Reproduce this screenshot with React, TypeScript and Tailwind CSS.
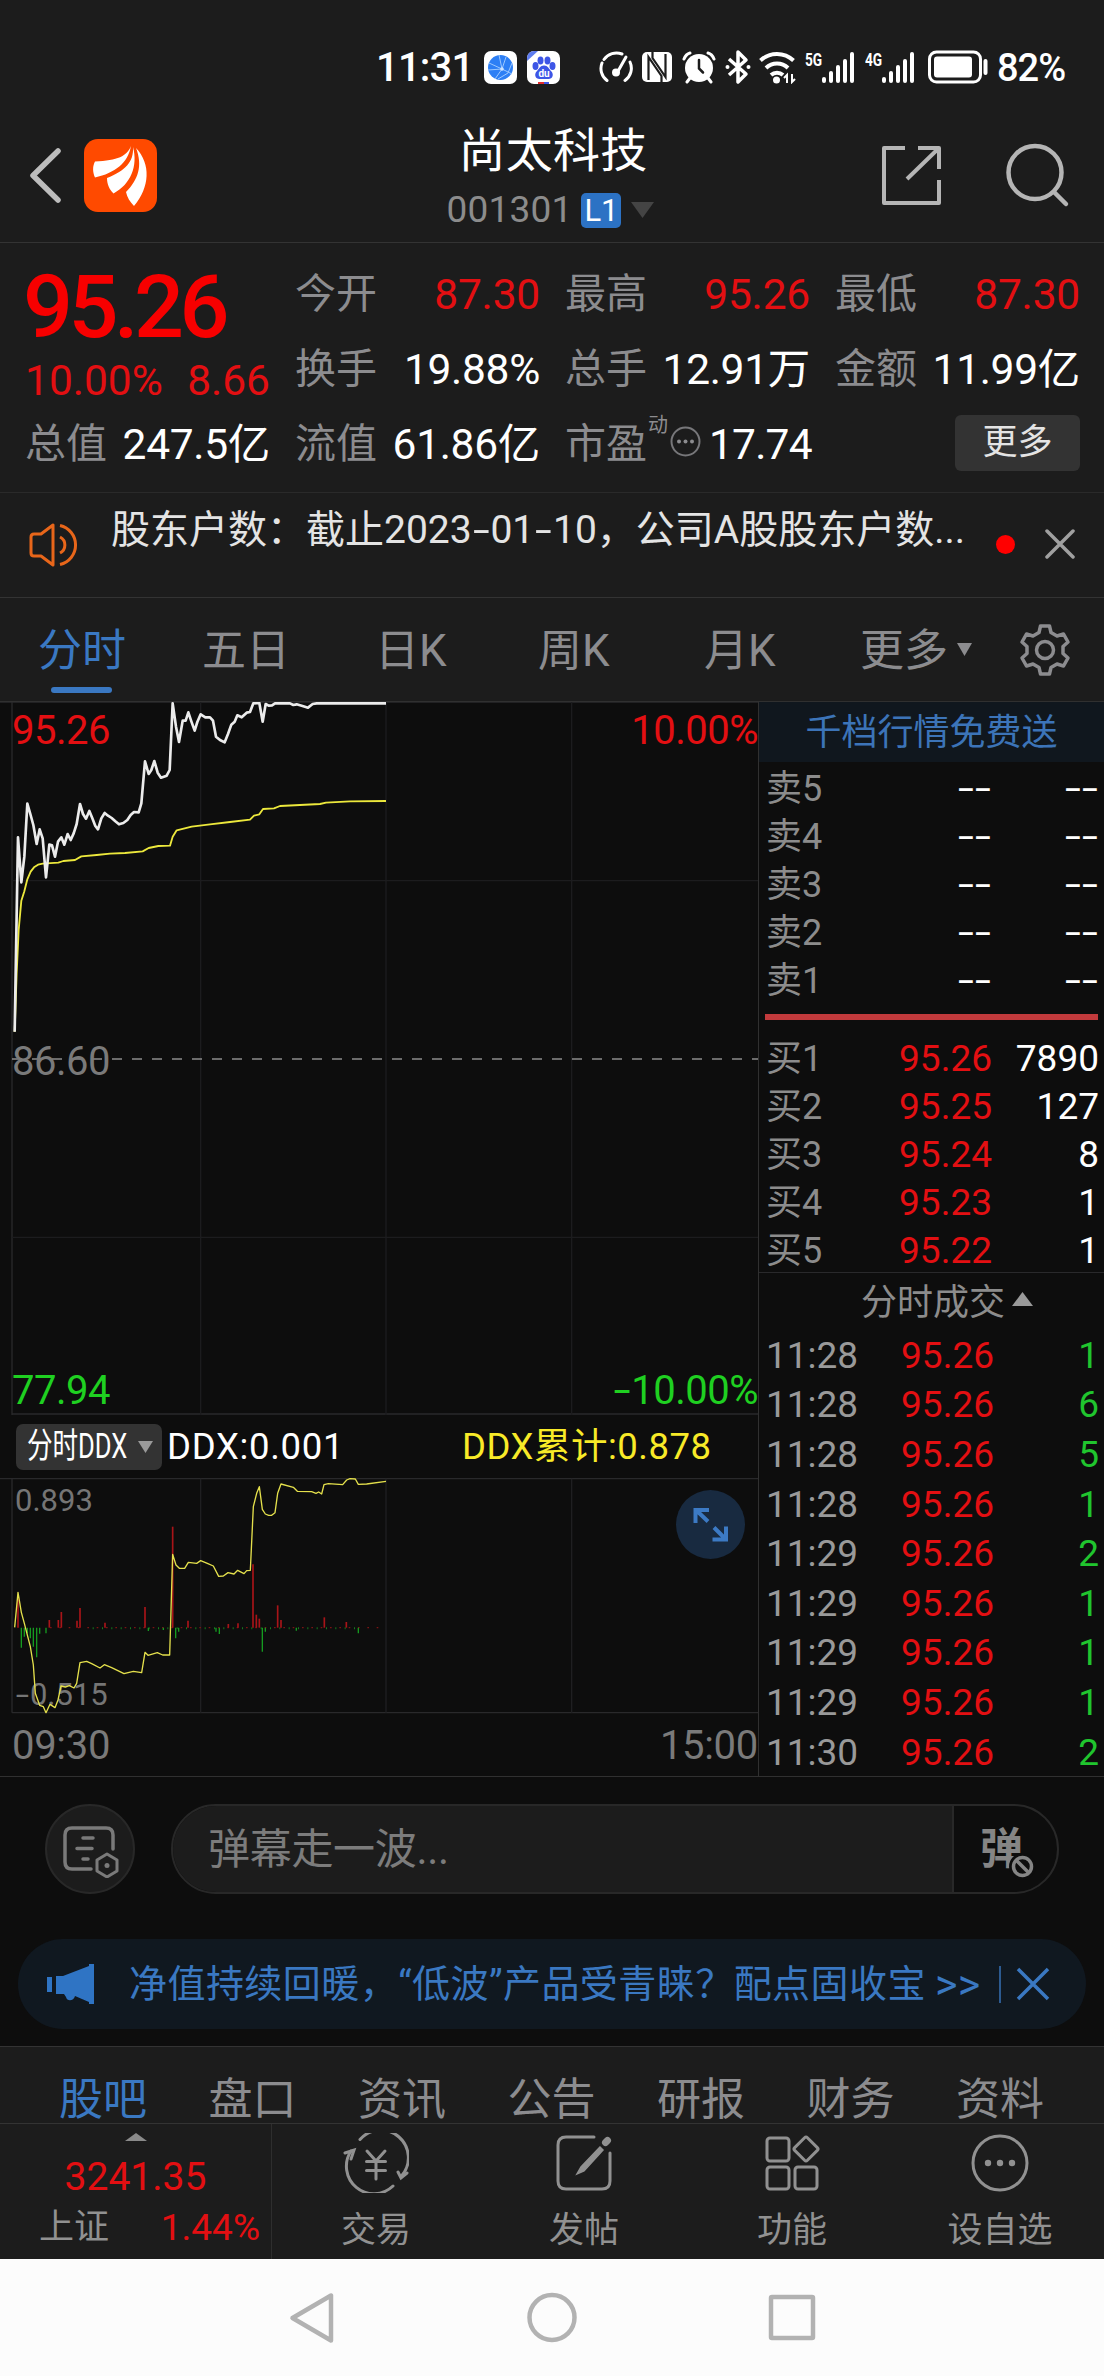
import React from 'react';

const stats = [
  [
    { label: '今开', value: '87.30', up: true },
    { label: '换手', value: '19.88%' },
    { label: '流值', value: '61.86亿' },
  ],
  [
    { label: '最高', value: '95.26', up: true },
    { label: '总手', value: '12.91万' },
  ],
  [
    { label: '最低', value: '87.30', up: true },
    { label: '金额', value: '11.99亿' },
  ],
];

const sells = ['卖5', '卖4', '卖3', '卖2', '卖1'];

const buys = [
  ['买1', '95.26', '7890'],
  ['买2', '95.25', '127'],
  ['买3', '95.24', '8'],
  ['买4', '95.23', '1'],
  ['买5', '95.22', '1'],
];

const trades = [
  ['11:28', '1'],
  ['11:28', '6'],
  ['11:28', '5'],
  ['11:28', '1'],
  ['11:29', '2'],
  ['11:29', '1'],
  ['11:29', '1'],
  ['11:29', '1'],
  ['11:30', '2'],
];

const infoTabs = ['股吧', '盘口', '资讯', '公告', '研报', '财务', '资料'];

const pricePoints =
  '44,1025 54,442 64,577 73,500 82,341 91,372 100,405 110,462 119,418 128,445 138,562 148,464 156,466 165,500 174,455 184,442 193,464 203,432 212,450 221,430 230,402 240,342 249,372 258,386 268,363 277,385 286,408 294,418 304,385 314,369 324,377 335,384 346,394 357,403 370,399 382,390 392,375 402,366 416,367 424,340 435,214 446,252 454,240 463,213 473,248 483,263 500,257 509,240 518,40 528,110 537,156 548,92 557,92 565,67 574,94 584,122 592,96 602,73 616,82 630,82 639,92 648,140 660,150 674,157 684,132 694,104 704,95 712,76 725,82 740,68 750,66 760,40 778,39 788,95 797,42 806,47 816,46 825,40 870,40 880,45 890,43 910,49 924,53 938,42 950,40 1158,40';

const avgPoints =
  '44,1025 50,850 56,720 64,632 73,604 82,568 92,545 102,532 114,524 128,521 175,518 190,513 225,510 244,499 290,495 330,491 375,489 428,484 446,474 475,468 510,467 518,440 530,421 575,410 630,403 690,396 750,389 762,377 778,373 789,357 822,355 840,348 900,345 960,342 978,338 1050,334 1158,333';

const ddxPoints =
  '44,832 54,727 64,787 73,820 91,890 100,945 106,1030 119,1066 130,1070 138,1088 150,1063 165,1073 174,1050 183,1008 196,1011 208,1007 222,1014 230,1000 240,938 260,934 275,941 300,954 313,944 335,953 372,971 400,964 425,968 435,907 444,916 472,908 488,915 509,915 518,613 528,645 538,655 554,655 565,637 590,640 602,632 622,640 640,648 656,679 670,678 684,668 702,672 713,661 732,671 740,662 751,661 760,470 770,430 778,410 787,478 796,492 806,496 815,496 825,488 833,430 843,402 880,412 892,424 935,425 948,430 956,426 965,432 972,404 985,401 1028,404 1040,390 1050,386 1066,387 1075,403 1100,402 1158,394';

const ddxUp = [
  [54, 745], [148, 810], [175, 810], [184, 786], [231, 812], [240, 774], [315, 818], [435, 771],
  [518, 530], [564, 812], [685, 822], [714, 820], [759, 643], [769, 794], [778, 806], [833, 766],
  [843, 810], [973, 802], [1039, 816],
];

const ddxDown = [
  [64, 893], [73, 860], [82, 850], [91, 865], [100, 890], [110, 922], [119, 851], [138, 850],
  [445, 843], [490, 840], [527, 865], [536, 845], [648, 845], [658, 852], [787, 905], [796, 845],
  [889, 842], [1075, 850],
];

// wide hyphen, Roboto's own is too short for numbers
function Dash() {
  return <span className="inline-block w-[0.48em] scale-x-[1.55] text-center">-</span>;
}

function Signal({ label }: { label: string }) {
  return (
    <div className="flex h-[34px] items-start text-white">
      <span className="w-[17px] text-[18px] leading-[20px] font-bold">
        <span className="inline-block origin-left scale-x-[0.76]">{label}</span>
      </span>
      <svg width="33" height="34" viewBox="17 0 33 34" fill="#fff">
        <rect x="17" y="27" width="4" height="6" rx="2" />
        <rect x="24" y="21" width="4" height="12" rx="2" />
        <rect x="31" y="15" width="4" height="18" rx="2" />
        <rect x="38" y="9" width="4" height="24" rx="2" />
        <rect x="45" y="2" width="4" height="31" rx="2" />
      </svg>
    </div>
  );
}

function StatusBar() {
  return (
    <div className="flex h-[100px] items-center pt-[34px] pl-[376px] text-white">
      <div className="w-[108px] pt-[2px] text-[40px] font-medium tracking-[-0.8px]">11:31</div>
      <svg className="mr-[10px]" width="33" height="33" viewBox="0 0 33 33">
        <rect width="33" height="33" rx="7" fill="#fff" />
        <circle cx="16.5" cy="16.5" r="12.5" fill="#2d7ff5" />
        <path d="M15 4l3 14M4 19l14-1 10 5M5 12l13 6M18 18l-7 10M22 6l-4 12M28 12l-4 10-10 6" fill="none" stroke="#9cc8ff" strokeWidth="1" />
        <circle cx="18" cy="18" r="1.8" fill="#cfe4ff" />
      </svg>
      <svg width="33" height="33" viewBox="0 0 33 33">
        <rect width="33" height="33" rx="7" fill="#fff" />
        <path d="M0 10V7a7 7 0 0 1 7-7h4L0 10z" fill="#5d7bee" />
        <g fill="#3d55e6">
          <ellipse cx="8.5" cy="15" rx="3" ry="4" />
          <ellipse cx="13.5" cy="9.5" rx="3" ry="4" />
          <ellipse cx="20.5" cy="9.5" rx="3" ry="4" />
          <ellipse cx="25.5" cy="15" rx="3" ry="4" />
          <path d="M17 14.500c4 0 5 3.500 7 5.500 3.500 3.500 1.500 8-2.500 8h-9c-4 0-6-4.500-2.500-8 2-2 3-5.500 7-5.500z" />
        </g>
        <text x="17" y="26" fontSize="10" fontWeight="700" fill="#fff" textAnchor="middle">du</text>
        <path d="M11 31h6v2h-6z" fill="#e02c2c" />
        <path d="M17 31h5v2h-5z" fill="#3d55e6" />
      </svg>
      {/* gauge */}
      <svg className="ml-[39px]" width="34" height="34" viewBox="0 0 34 34" fill="none" stroke="#fff" strokeWidth="3" strokeLinecap="round">
        <path d="M8 30.500A15 15 0 0 1 3 13M5 9.500A15 15 0 0 1 23 4M31 12a15 15 0 0 1-5 18.500" />
        <path d="M27 7l-9 16" strokeWidth="3" />
        <circle cx="17" cy="22.500" r="2.500" fill="#fff" />
      </svg>
      {/* nfc */}
      <svg className="ml-[9px]" width="30" height="32" viewBox="0 0 30 32">
        <rect y="1" width="30" height="30" rx="5" fill="#fff" />
        <path d="M6.500 29V6l13 19V31M23.500 3v23L10.500 7V1" fill="none" stroke="#1c1c1c" strokeWidth="2.200" />
      </svg>
      {/* alarm */}
      <svg className="ml-[10px]" width="34" height="34" viewBox="0 0 34 34" fill="none" stroke="#fff" strokeWidth="3" strokeLinecap="round">
        <circle cx="17" cy="18" r="14" fill="#fff" stroke="none" />
        <path d="M2 9q2-5 6-6M32 9q-2-5-6-6M8 28l-3 4M26 28l3 4" />
        <path d="M17 10v8.500l4 4" stroke="#1c1c1c" strokeWidth="2.500" />
      </svg>
      {/* bluetooth */}
      <svg className="ml-[9px]" width="26" height="36" viewBox="0 0 26 36" fill="none" stroke="#fff" strokeWidth="3.500">
        <path d="M4 10l17 15-8 8V3l8 8L4 26" strokeLinejoin="round" />
        <circle cx="2.500" cy="18" r="2" fill="#fff" stroke="none" />
        <circle cx="23.500" cy="18" r="2" fill="#fff" stroke="none" />
      </svg>
      {/* wifi */}
      <svg className="ml-[8px]" width="38" height="34" viewBox="0 0 38 34" fill="none" stroke="#fff" strokeWidth="4">
        <path d="M1.500 10.500a24 24 0 0 1 33 0M7 18a16 16 0 0 1 22 0M12 25a9 9 0 0 1 12 0" />
        <circle cx="17.500" cy="30" r="3.500" fill="#fff" stroke="none" />
        <path d="M28 33v-8l-3 3M33 24v8l3-3" strokeWidth="2" />
      </svg>
      <div className="ml-[8px]"><Signal label="5G" /></div>
      <div className="ml-[10px]"><Signal label="4G" /></div>
      <svg className="ml-[13px]" width="60" height="34" viewBox="0 0 60 34">
        <rect x="1.500" y="2" width="51" height="30" rx="7" fill="none" stroke="#fff" strokeWidth="3" />
        <rect x="6" y="6.500" width="38" height="21" rx="3" fill="#fff" />
        <rect x="55.500" y="9" width="4" height="16" rx="2" fill="#fff" />
      </svg>
      <div className="ml-[9px] pt-[2px] text-[38px] font-medium tracking-[-1px]">82%</div>
    </div>
  );
}

function Header() {
  return (
    <header className="flex h-[143px] border-b border-[#333333]">
      <div className="flex w-[400px] items-start pt-[39px] pl-[28px]">
        <svg className="mt-[7px]" width="36" height="60" viewBox="0 0 36 60" fill="none" stroke="#bdbdbd" strokeWidth="5.500" strokeLinecap="round" strokeLinejoin="round">
          <path d="M30 5L5 29.500 30 54" />
        </svg>
        <svg className="ml-[20px]" width="73" height="73" viewBox="0 0 73 73">
          <rect width="73" height="73" rx="14" fill="#ff4a00" />
          <g fill="#fff">
            <path d="M47 7C43 17 34 21.500 11 22.500 8.500 27 8.500 33 11 38.500 31 34 44 24 47 7z" />
            <path d="M49 8c1 15-8 24-26 31 0 6 2 11 6.500 15.500C47 45 54 27 49 8z" />
            <path d="M52 9c7 18 2 32-10 44 1 5 4 10 8 14C66 48 67 25 52 9z" />
          </g>
        </svg>
      </div>
      <div className="flex w-[306px] flex-col items-center pt-[20px]">
        <h1 className="text-[47px] leading-[62px] tracking-[0.3px] text-white">尚太科技</h1>
        <div className="mt-[3px] flex h-[50px] items-center pr-[5px]">
          <span className="text-[37px] tracking-[0.2px] text-[#8c8c8c]">001301</span>
          <span className="ml-[9px] flex h-[35px] w-[40px] items-center justify-center rounded-[5px] bg-[#2c72c4] text-[31px] leading-none text-white">L1</span>
          <svg className="ml-[10px]" width="23" height="16" viewBox="0 0 23 16"><path d="M0 0h23L11.500 16z" fill="#444" /></svg>
        </div>
      </div>
      <div className="flex flex-1 items-start pt-[42px] pl-[174px]">
        <svg className="mt-[2px]" width="62" height="62" viewBox="0 0 62 62" fill="none" stroke="#b5b5b5" strokeWidth="4">
          <path d="M25 4H4v55h55V36M38 4h21v21M59 4L27 35" strokeLinejoin="round" />
        </svg>
        <svg className="ml-[61px]" width="68" height="66" viewBox="0 0 68 66" fill="none" stroke="#b5b5b5" strokeWidth="4.500" strokeLinecap="round">
          <circle cx="32" cy="30.500" r="26.500" />
          <path d="M51 50l12 12" />
        </svg>
      </div>
    </header>
  );
}

function Stat({ label, value, up }: { label: string; value: string; up?: boolean }) {
  return (
    <div className="flex h-[75px] items-center justify-between pt-[2px]">
      <span className="text-[41px] text-[#8c8c8f]">{label}</span>
      <span className={up ? 'text-[42.500px] tracking-[-0.200px] text-[#e30f12]' : 'text-[42.500px] tracking-[-0.300px] text-white'}>{value}</span>
    </div>
  );
}

function Quote() {
  return (
    <section className="grid h-[250px] grid-cols-4 gap-x-[25px] border-b border-[#2a2a2a] pt-[13px] pr-[24px] pl-[25px]">
      <div>
        <div className="ml-[-2px] h-[100px] text-[88px] leading-[101px] font-medium tracking-[-4.500px] text-[#f70000]">95.26</div>
        <div className="flex h-[50px] items-center justify-between text-[42.500px] text-[#e30f12]">
          <span>10.00%</span>
          <span>8.66</span>
        </div>
        <Stat label="总值" value="247.5亿" />
      </div>
      {stats.map((col, i) => (
        <div key={i}>
          {col.map((s) => (
            <Stat key={s.label} {...s} />
          ))}
          {i === 1 && (
            <div className="flex h-[75px] items-center pt-[2px] whitespace-nowrap">
              <span className="text-[41px] text-[#8c8c8f]">市盈</span>
              <span className="mb-[40px] ml-[1px] text-[20px] text-[#8c8c8f]">动</span>
              <svg className="mt-[-6px] ml-[2px] shrink-0" width="31" height="31" viewBox="0 0 31 31">
                <circle cx="15.500" cy="15.500" r="14" fill="none" stroke="#77777a" strokeWidth="2" />
                <g fill="#8c8c8f">
                  <circle cx="9" cy="15.500" r="2" />
                  <circle cx="15.500" cy="15.500" r="2" />
                  <circle cx="22" cy="15.500" r="2" />
                </g>
              </svg>
              <span className="ml-[8px] text-[42.500px] tracking-[-0.800px] text-white">17.74</span>
            </div>
          )}
          {i === 2 && (
            <div className="flex h-[75px] items-center justify-end">
              <button className="mt-[-1px] h-[56px] w-[125px] rounded-[6px] bg-[#333333] text-[35px] leading-[54px] text-[#e4e4e4]">更多</button>
            </div>
          )}
        </div>
      ))}
    </section>
  );
}

function Notice() {
  return (
    <div className="flex h-[105px] items-start border-b border-[#333333] pl-[29px]">
      <svg className="mt-[29px]" width="52" height="46" viewBox="0 0 52 46" fill="none" stroke="#e8661a" strokeWidth="3" strokeLinejoin="round">
        <path d="M2 15q0-3 3-3h7L24 3v40L12 34H5q-3 0-3-3z" />
        <path d="M31 15a9 9 0 0 1 0 16M31 3.500a20 20 0 0 1 0 39" />
      </svg>
      <p className="mt-[8px] ml-[30px] w-[885px] text-[39px] leading-[58px] whitespace-nowrap text-[#e4e4e4]">
        股东户数：截止2023<Dash />01<Dash />10，公司A股股东户数...
      </p>
      <div className="mt-[42px] h-[19px] w-[19px] rounded-full bg-[#ff0000]" />
      <svg className="mt-[36px] ml-[30px]" width="30" height="30" viewBox="0 0 30 30" stroke="#a0a0a0" strokeWidth="3.500" strokeLinecap="round">
        <path d="M2 2l26 26M28 2L2 28" />
      </svg>
    </div>
  );
}

function ChartTabs() {
  return (
    <nav className="flex h-[103px] items-center pt-[3px] pl-[38px] text-[44px] text-[#8c8c8f]">
      <div className="relative w-[164px] text-[#3a78c2]">
        分时
        <div className="absolute top-[69px] left-[13px] h-[6px] w-[61px] rounded-full bg-[#3a78c2]" />
      </div>
      <div className="w-[173px]">五日</div>
      <div className="w-[163px]">日K</div>
      <div className="w-[165px]">周K</div>
      <div className="w-[98px] pl-[1px]">月K</div>
      <div className="ml-[59px]">更多</div>
      <svg className="mt-[-3px] ml-[9px]" width="15" height="13" viewBox="0 0 15 13"><path d="M0 0h15L7.500 13z" fill="#8c8c8f" /></svg>
      <svg className="mt-[-3px] ml-[46px]" width="54" height="54" viewBox="0 0 54 54" fill="none" stroke="#8c8c8f" strokeWidth="3.500" strokeLinejoin="round">
        <path d="M22.500 3h9l1.500 6.500 6 3.500 6.500-2 4.500 8-5 4.500v7l5 4.500-4.500 8-6.500-2-6 3.500-1.500 6.500h-9l-1.500-6.500-6-3.500-6.500 2-4.500-8 5-4.500v-7l-5-4.500 4.500-8 6.500 2 6-3.500z" />
        <circle cx="27" cy="27" r="8.500" />
      </svg>
    </nav>
  );
}

function PriceChart() {
  return (
    <div className="relative h-[713px]">
      <svg className="block" width="758" height="713" viewBox="0 36 2274 2139" fill="none">
        <g stroke="#232325" strokeWidth="4">
          <path d="M36 36V2175M0 36H2274M36 2172H2274" stroke="#29292b" />
          <path d="M602 36V2175M1158 36V2175M1715 36V2175M36 572H2274M36 1642H2274" stroke="#1c1c1e" />
        </g>
        <path d="M36 1107H2274" stroke="#8c8c8c" strokeWidth="5" strokeDasharray="30 30" />
        <polyline points={avgPoints} stroke="#ece83c" strokeWidth="5.500" strokeLinejoin="round" />
        <polyline points={pricePoints} stroke="#ececec" strokeWidth="8" strokeLinejoin="round" />
      </svg>
      <div className="absolute inset-0 flex flex-col justify-between text-[40px] leading-[48px]">
        <div className="flex justify-between pt-[5px] pl-[12px] text-[#e30f12]">
          <span className="tracking-[-0.500px]">95.26</span>
          <span className="tracking-[-0.500px]">10.00%</span>
        </div>
        <div className="pt-[1px] pl-[12px] tracking-[-0.500px] text-[#7a7a7a]">86.60</div>
        <div className="flex justify-between pl-[12px] tracking-[-0.500px] text-[#1fd021]">
          <span>77.94</span>
          <span><Dash />10.00%</span>
        </div>
      </div>
    </div>
  );
}

function DdxChart() {
  return (
    <>
      <div className="flex h-[63px] items-center pl-[16px] text-[36.500px] text-white">
        <div className="flex h-[46px] w-[146px] items-center rounded-[7px] bg-[#333333] pl-[11px]">
          <div className="w-[111px]">
            <div className="w-[140px] origin-left scale-x-[0.73] text-[35px] leading-[46px]">分时DDX</div>
          </div>
          <svg width="15" height="12" viewBox="0 0 15 12"><path d="M0 0h15L7.500 12z" fill="#9a9a9a" /></svg>
        </div>
        <span className="ml-[5px] w-[295px] pt-[2px] tracking-[0.700px]">DDX:0.001</span>
        <span className="pt-[2px] tracking-[0.500px] text-[#f8ea28]">DDX累计:0.878</span>
      </div>
      <div className="relative h-[235px]">
        <div className="absolute top-[9px] left-[15px] text-[31px] leading-[28px] text-[#757575]">0.893</div>
        <div className="absolute top-[203px] left-[15px] text-[31px] leading-[28px] text-[#757575]"><Dash />0.515</div>
        <svg className="absolute top-0 left-0 overflow-visible" width="758" height="235" viewBox="0 384 2274 705" fill="none">
          <path d="M36 386V1088M0 386H2274M36 1088H2274" stroke="#29292b" strokeWidth="4" />
          <path d="M602 386V1088M1158 386V1088M1715 386V1088" stroke="#1f1f21" strokeWidth="4" />
          <path d="M150 833H1158" stroke="#7a1414" strokeWidth="4" strokeDasharray="5 23" />
          <path d="M278 835H1075" stroke="#147a1c" strokeWidth="6" strokeDasharray="3 25" />
          {ddxUp.map(([x, y]) => (
            <path key={x} d={`M${x} 833V${y}`} stroke="#a81418" strokeWidth="5" />
          ))}
          {ddxDown.map(([x, y]) => (
            <path key={x} d={`M${x} 833V${y}`} stroke="#159a20" strokeWidth="4" />
          ))}
          <polyline points={ddxPoints} stroke="#e4e04c" strokeWidth="4" strokeLinejoin="round" />
        </svg>
        <svg className="absolute top-[12px] left-[676px]" width="69" height="69" viewBox="0 0 69 69" fill="none" stroke="#3c7ac4" strokeWidth="4">
          <circle cx="34.500" cy="34.500" r="34.500" fill="#182a40" stroke="none" />
          <path d="M33 20H19.500v13M20 20l12 11.500M36.500 49.500H50v-13M49.500 49L38 37.500" />
        </svg>
      </div>
      <div className="flex h-[63px] items-center justify-between pt-[3px] pl-[12px] text-[40px] tracking-[-0.300px] text-[#7a7a7a]">
        <span>09:30</span>
        <span>15:00</span>
      </div>
    </>
  );
}

function OrderBook() {
  return (
    <aside className="flex-1 text-[37px] leading-[50px]">
      <div className="h-[60px] bg-[#10171e] text-center text-[36px] leading-[63px] text-[#3c74b8]">千档行情免费送</div>
      <div className="pt-[2px]">
        {sells.map((s) => (
          <div key={s} className="flex h-[48px] pr-[5px] pl-[7px] text-white">
            <span className="w-[100px] text-[36px] text-[#8c8c8c]">{s}</span>
            <span className="w-[126px] text-right"><Dash /><Dash /></span>
            <span className="flex-1 text-right"><Dash /><Dash /></span>
          </div>
        ))}
      </div>
      <div className="mx-[6px] mt-[10px] mb-[14px] h-[6px] bg-[#c23a3c]" />
      {buys.map(([name, price, vol]) => (
        <div key={name} className="flex h-[48px] pr-[5px] pl-[7px] text-white">
          <span className="w-[100px] text-[36px] text-[#8c8c8c]">{name}</span>
          <span className="w-[126px] text-right text-[#e30f12]">{price}</span>
          <span className="flex-1 text-right">{vol}</span>
        </div>
      ))}
      <div className="mt-[-2px] flex h-[58px] items-center border-t border-[#29292b] pt-[2px] pl-[102px] text-[36px] text-[#8c8c8c]">
        分时成交
        <svg className="mt-[-7px] ml-[7px]" width="21" height="14" viewBox="0 0 21 14"><path d="M10.500 0L21 14H0z" fill="#999" /></svg>
      </div>
      {trades.map(([time, vol], i) => (
        <div key={i} className="flex h-[49.600px] items-center pt-[2px] pr-[5px] pl-[7px]">
          <span className="w-[100px] text-[#999999]">{time}</span>
          <span className="w-[128px] text-right text-[#e30f12]">95.26</span>
          <span className="flex-1 text-right text-[#20c52e]">{vol}</span>
        </div>
      ))}
    </aside>
  );
}

function CommentBar() {
  return (
    <div className="flex pt-[27px] pl-[45px]">
      <div className="flex h-[90px] w-[90px] items-center justify-center rounded-full border-2 border-[#282828] bg-[#1c1c1c]">
        <svg className="mt-[5px] ml-[2px]" width="56" height="52" viewBox="0 0 56 52" fill="none" stroke="#7a7a7a" strokeWidth="3.500" strokeLinecap="round" strokeLinejoin="round">
          <path d="M28 43H9q-7 0-7-7V9q0-7 7-7h34q7 0 7 7v14" />
          <path d="M20 12h10M14 22.500h15M20 33h5" />
          <path d="M44 28l10 6v11l-10 6-10-6V34z" strokeWidth="3" />
          <circle cx="44" cy="39.500" r="2.500" fill="#7a7a7a" stroke="none" />
        </svg>
      </div>
      <div className="ml-[36px] flex h-[90px] w-[888px] overflow-hidden rounded-full border-2 border-[#282828]">
        <div className="w-[781px] border-r-2 border-[#282828] bg-[#1c1c1c] pl-[35px] text-[42px] leading-[88px] tracking-[-0.300px] text-[#7c7c7c]">弹幕走一波...</div>
        <div className="relative flex-1 pl-[26px] text-[43px] leading-[86px] font-bold text-[#858585]">
          弹
          <svg className="absolute top-[47px] left-[55px]" width="27" height="27" viewBox="0 0 27 27" fill="#0d0d0d" stroke="#858585" strokeWidth="3.500">
            <circle cx="13.500" cy="13.500" r="13.500" stroke="none" />
            <circle cx="13.500" cy="13.500" r="9" />
            <path d="M7.500 7.500l12 12" />
          </svg>
        </div>
      </div>
    </div>
  );
}

function AdBar() {
  return (
    <div className="mx-[18px] mt-[45px] mb-[17px] flex h-[90px] items-center rounded-full bg-[#101820] pl-[29px] text-[#3a78c2]">
      <svg width="47" height="40" viewBox="0 0 47 40" fill="#2f74c4">
        <path d="M0 13h5v15H0zM9 12h7L42 2v-2h5v40h-5v-2l-14-6c-1 5-8 6-9 1l-2-3H9z" />
      </svg>
      <p className="ml-[35px] flex w-[870px] items-center text-[38px] tracking-[0.450px] whitespace-nowrap">
        净值持续回暖，“低波”产品受青睐？配点固收宝
        <span className="ml-[9px] text-[43px] leading-none">&gt;&gt;</span>
      </p>
      <div className="h-[37px] w-[2px] bg-[#2c5a90]" />
      <svg className="ml-[15px]" width="34" height="34" viewBox="0 0 34 34" stroke="#3a78c2" strokeWidth="3.500">
        <path d="M2 2l30 30M32 2L2 32" />
      </svg>
    </div>
  );
}

function BottomItem({ label, children }: { label: string; children: React.ReactNode }) {
  return (
    <div className="flex flex-1 flex-col items-center pt-[9px]">
      {children}
      <span className="mt-[15px] text-[35px] leading-[46px]">{label}</span>
    </div>
  );
}

function BottomBar() {
  return (
    <footer className="flex h-[136px] border-t border-[#333333] text-[#919191]">
      <div className="flex w-[272px] flex-col items-center border-r border-[#2e2e2e]">
        <svg className="mt-[9px]" width="22" height="8" viewBox="0 0 22 8"><path d="M11 0l11 8H0z" fill="#8a8a8a" /></svg>
        <div className="mt-[12px] text-[39px] leading-[48px] text-[#e30f12]">3241.35</div>
        <div className="flex w-full items-center justify-between pt-[2px] pr-[11px] pl-[39px] leading-[50px]">
          <span className="text-[35px]">上证</span>
          <span className="text-[37px] text-[#e30f12]">1.44%</span>
        </div>
      </div>
      <div className="flex flex-1">
        <BottomItem label="交易">
          <svg width="66" height="60" viewBox="0 0 66 60" fill="none" stroke="#919191" strokeWidth="3" strokeLinecap="round">
            <path d="M17 6.500A27.500 27.500 0 0 1 58.500 43M50 53A27.500 27.500 0 0 1 8 18" />
            <path d="M2 20l9-3-3 9M64 40l-6 5-3-6" />
            <path d="M24 18l9 10 9-10M33 28v18M23.500 28.500h19M23.500 37.500h19" />
          </svg>
        </BottomItem>
        <BottomItem label="发帖">
          <svg width="58" height="60" viewBox="0 0 58 60" fill="none" stroke="#919191" strokeWidth="3" strokeLinecap="round">
            <path d="M39 4H11q-8 0-8 8v36q0 8 8 8h36q8 0 8-8V20" />
            <path d="M45 14L26 34l-4 7 7-3 19-21z" fill="#919191" strokeWidth="1.500" />
            <path d="M50.500 9.500l2-2" strokeWidth="7" />
          </svg>
        </BottomItem>
        <BottomItem label="功能">
          <svg width="56" height="60" viewBox="0 0 56 60" fill="none" stroke="#919191" strokeWidth="3">
            <rect x="3" y="5" width="22" height="23" rx="3" />
            <rect x="3" y="34" width="22" height="22" rx="3" />
            <rect x="31" y="34" width="22" height="22" rx="3" />
            <rect x="-9" y="-9" width="18" height="18" rx="2" transform="translate(42 16) rotate(45)" />
          </svg>
        </BottomItem>
        <BottomItem label="设自选">
          <svg width="60" height="60" viewBox="0 0 60 60" fill="none" stroke="#919191" strokeWidth="3">
            <circle cx="30" cy="30" r="27" />
            <g fill="#919191" stroke="none">
              <circle cx="18" cy="30" r="3.200" />
              <circle cx="30" cy="30" r="3.200" />
              <circle cx="42" cy="30" r="3.200" />
            </g>
          </svg>
        </BottomItem>
      </div>
    </footer>
  );
}

function SystemNav() {
  return (
    <div className="flex h-[117px] items-center justify-center bg-[#fcfcfc]">
      <svg width="540" height="56" viewBox="0 0 540 56" fill="none" stroke="#b2b2b2" strokeWidth="4.500" strokeLinejoin="round">
        <path d="M49 5.500v45L10.500 28z" />
        <circle cx="270" cy="27.500" r="22.500" />
        <rect x="489" y="7" width="42" height="41" rx="1" />
      </svg>
    </div>
  );
}

export default function App() {
  return (
    <div className="flex h-[2376px] w-[1104px] flex-col overflow-hidden bg-[#1c1c1c] font-[Roboto,'Noto_Sans_CJK_SC',sans-serif]">
      <StatusBar />
      <Header />
      <Quote />
      <Notice />
      <ChartTabs />

      <div className="bg-[#0d0d0d]">
        <main className="flex h-[1076px] border-y border-[#303030]">
          <div className="w-[759px] border-r border-[#303030]">
            <PriceChart />
            <DdxChart />
          </div>
          <OrderBook />
        </main>
        <CommentBar />
        <AdBar />
      </div>

      <nav className="flex h-[77px] border-t border-[#333333] pt-[29px] pl-[59px] text-[44px] leading-[49px] text-[#8c8c8f]">
        {infoTabs.map((tab, i) => (
          <div key={tab} className={i === 0 ? 'w-[149.500px] shrink-0 text-[#3a78c2]' : 'w-[149.500px] shrink-0'}>{tab}</div>
        ))}
      </nav>
      <BottomBar />
      <SystemNav />
    </div>
  );
}
